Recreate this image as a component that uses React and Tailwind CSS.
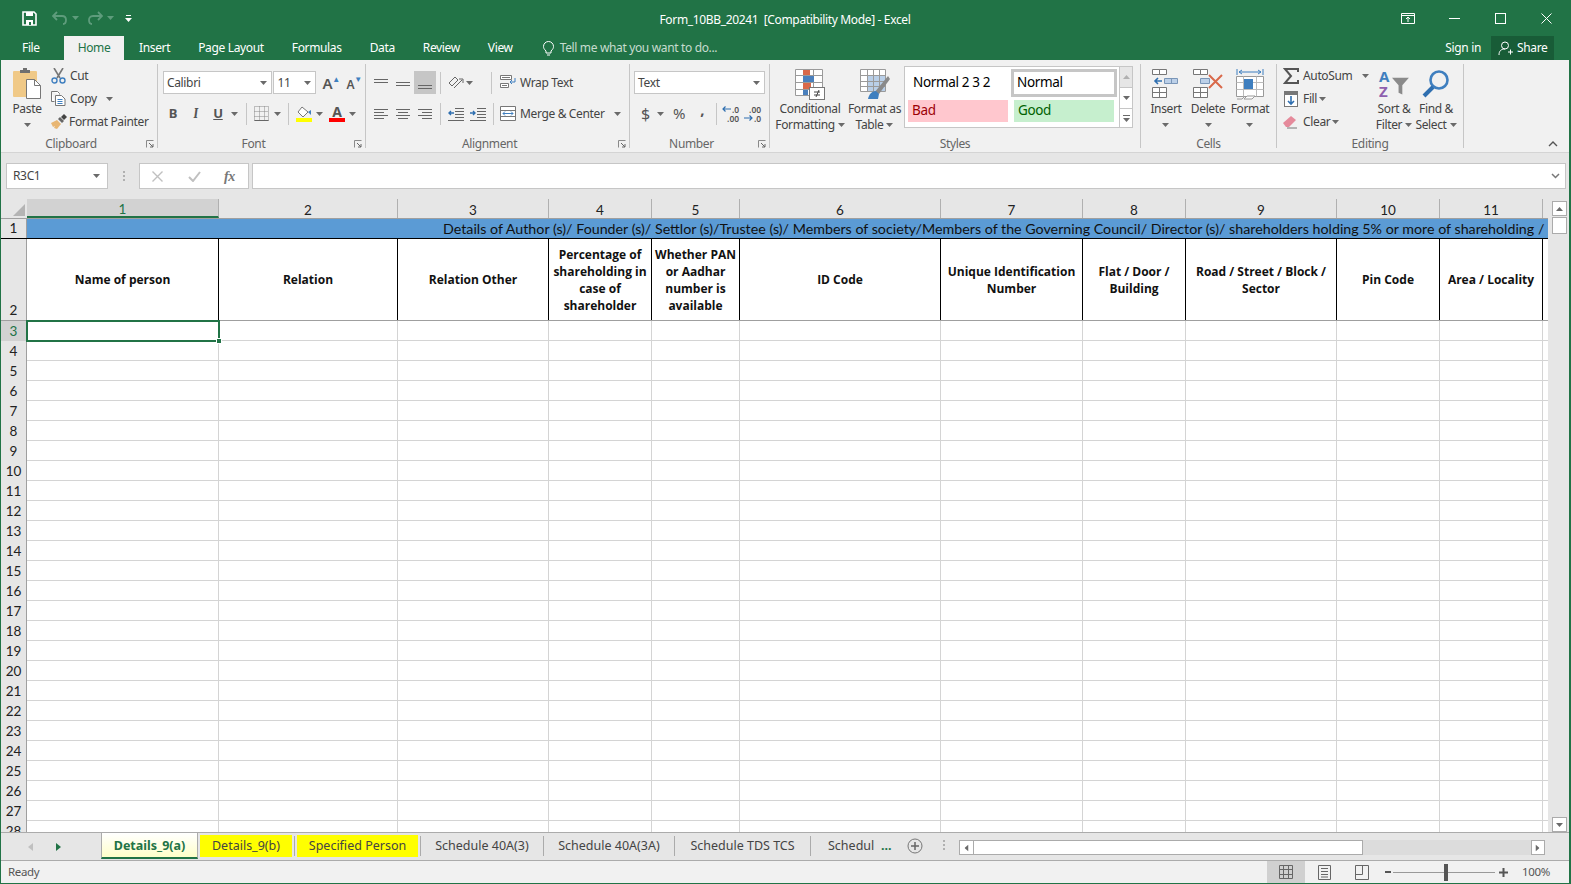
import React from "react";

// column widths of the sheet, in order
const columns = [
  { n: 1, w: "w-[192px]", title: "Name of person" },
  { n: 2, w: "w-[179px]", title: "Relation" },
  { n: 3, w: "w-[151px]", title: "Relation Other" },
  { n: 4, w: "w-[103px]", title: "Percentage of shareholding in case of shareholder" },
  { n: 5, w: "w-[88px]", title: "Whether PAN or Aadhar number is available" },
  { n: 6, w: "w-[201px]", title: "ID Code" },
  { n: 7, w: "w-[142px]", title: "Unique Identification Number" },
  { n: 8, w: "w-[103px]", title: "Flat / Door / Building" },
  { n: 9, w: "w-[151px]", title: "Road / Street / Block / Sector" },
  { n: 10, w: "w-[103px]", title: "Pin Code" },
  { n: 11, w: "w-[103px]", title: "Area / Locality" },
];
const emptyRows = Array.from({ length: 26 }, (_, i) => i + 3);

function Chev({ className = "", fill = "#6a6a6a" }) {
  return (
    <svg width="7" height="4" viewBox="0 0 7 4" className={className}>
      <path d="M0 0h7L3.5 4z" fill={fill} />
    </svg>
  );
}

function Sep({ className = "" }) {
  return <div className={`w-px h-[22px] bg-[#c6c6c6] ${className}`} />;
}

function Group({ className, label, launcher, children }) {
  return (
    <div className={`relative h-[84px] border-r border-[#c6c6c6] shrink-0 ${className}`}>
      {children}
      <div className={`absolute bottom-[-4px] left-0 right-0 text-center text-[12px] leading-[16px] text-[#666] ${launcher ? "pr-[16px]" : ""}`}>{label}</div>
      {launcher && (
        <svg width="8" height="8" viewBox="0 0 8 8" className="absolute right-[3px] bottom-0">
          <path d="M0.5 7.5V0.5H7.5" fill="none" stroke="#8a8a8a" />
          <path d="M3 3l4 4M7 4v3H4" fill="none" stroke="#666" />
        </svg>
      )}
    </div>
  );
}

function BigBtn({ icon, lines, chevOnly, className = "" }) {
  return (
    <div className={`flex flex-col items-center shrink-0 ${className}`}>
      <div className="h-[32px] flex items-center justify-center">{icon}</div>
      <div className="mt-px text-[12px] leading-[16px] text-[#444] text-center whitespace-nowrap">
        {lines.map((l, i) => (
          <div key={i} className="flex items-center justify-center gap-[3px] h-[16px]">
            {l}
            {i === lines.length - 1 && !chevOnly && <Chev />}
          </div>
        ))}
        {chevOnly && (
          <div className="h-[16px] flex items-center justify-center">
            <Chev />
          </div>
        )}
      </div>
    </div>
  );
}

function SelectBox({ className, text }) {
  return (
    <div className={`h-[23px] bg-white border border-[#c6c6c6] flex items-center justify-between pl-[3px] pr-[4px] text-[12px] text-[#444] ${className}`}>
      <span>{text}</span>
      <Chev />
    </div>
  );
}

function Lines({ rows }) {
  return (
    <svg width="16" height="14" viewBox="0 0 16 14">
      {rows.map((r, i) => (
        <path key={i} d={`M${r[0]} ${r[2]}.5H${r[1]}`} stroke="#666" />
      ))}
    </svg>
  );
}

function ClipboardGroup() {
  return (
    <Group className="w-[157px]" label="Clipboard" launcher>
      <div className="flex pl-[9px]">
        <BigBtn
          chevOnly
          lines={["Paste"]}
          className="w-[34px] mt-[4px]"
          icon={
            <svg width="30" height="32" viewBox="0 0 30 32">
              <rect x="1" y="3" width="24" height="26" rx="1" fill="#f0c987" />
              <path d="M8 5V2h3V0h4v2h3v3z" fill="#6f6f6f" />
              <path d="M14.5 11.5h8l6 6v13h-14z" fill="#fff" stroke="#777" />
              <path d="M22.5 11.5v6h6" fill="none" stroke="#777" />
            </svg>
          }
        />
        <div className="ml-[7px] flex flex-col text-[12px] text-[#444] leading-[23px]">
          <div className="flex items-center h-[23px]">
            <svg width="15" height="16" viewBox="0 0 15 16" className="mr-[4px]">
              <path d="M3 0l6 10M12 0L6 10" stroke="#777" strokeWidth="1.6" fill="none" />
              <circle cx="3.5" cy="12.5" r="2.5" fill="none" stroke="#3f7fbf" strokeWidth="1.4" />
              <circle cx="11.5" cy="12.5" r="2.5" fill="none" stroke="#3f7fbf" strokeWidth="1.4" />
            </svg>
            Cut
          </div>
          <div className="flex items-center h-[23px]">
            <svg width="15" height="15" viewBox="0 0 15 15" className="mr-[4px]">
              <path d="M.5.5h6l2 2v1M.5.5v10h3" fill="#fff" stroke="#777" />
              <path d="M4.5 4.5h6l3.5 3.5v6.5h-9.500z" fill="#fff" stroke="#777" />
              <path d="M6.500 8.500h5M6.500 10.500h5M6.500 12.500h5" stroke="#3f7fbf" />
            </svg>
            Copy
            <Chev className="ml-[9px]" />
          </div>
          <div className="flex items-center h-[23px]">
            <svg width="16" height="15" viewBox="0 0 16 15" className="mr-[2px]">
              <path d="M0 9l6-3 4 4-4 5-3-1 1-2-2 1z" fill="#e8b673" />
              <path d="M7 5l4 4 2-2-4-4z" fill="#666" />
              <path d="M10 3l3-3 3 3-3 3z" fill="#444" />
            </svg>
            Format Painter
          </div>
        </div>
      </div>
    </Group>
  );
}

function FontGroup() {
  const slot = "flex items-center justify-center shrink-0";
  return (
    <Group className="w-[208px]" label="Font" launcher>
      <div className="flex items-center pt-[7px] pl-[5px]">
        <SelectBox className="w-[110px]" text="Calibri" />
        <SelectBox className="w-[43px] ml-px" text="11" />
        <div className="ml-[4px] w-[22px] flex justify-center items-end text-[15px] leading-none text-[#555] font-semibold">
          A<span className="text-[8px] text-[#3f7fbf] mb-[8px]">▲</span>
        </div>
        <div className="ml-px w-[22px] flex justify-center items-end text-[12px] leading-none text-[#555] font-semibold">
          A<span className="text-[8px] text-[#3f7fbf] mb-[8px]">▼</span>
        </div>
      </div>
      <div className="flex items-center pl-[4px] mt-[8px] h-[23px] text-[#555]">
        <div className={`${slot} w-[22px] text-[13px] font-bold`}>B</div>
        <div className={`${slot} w-[23px] text-[13px] italic font-serif font-bold`}>I</div>
        <div className={`${slot} w-[22px] text-[13px] font-bold underline`}>U</div>
        <Chev className="ml-[2px]" />
        <Sep className="ml-[8px]" />
        <div className={`${slot} ml-[7px]`}>
          <svg width="15" height="15" viewBox="0 0 15 15">
            <path d="M.5.5h14v14H.5z M5.500.5v14M10.500.5v14M.5 5.500h14M.5 10.500h14" fill="none" stroke="#888" strokeDasharray="1 1" />
            <path d="M.5 14.500h14" stroke="#666" />
          </svg>
        </div>
        <Chev className="ml-[5px]" />
        <Sep className="ml-[7px]" />
        <div className="ml-[7px] flex flex-col items-center w-[16px]">
          <svg width="16" height="12" viewBox="0 0 16 12">
            <path d="M6 1l6 5-5 5-5-5z" fill="#fff" stroke="#777" />
            <path d="M12 6l3-2v5z" fill="#3f7fbf" />
          </svg>
          <div className="w-[16px] h-[4px] bg-[#ffff00]" />
        </div>
        <Chev className="ml-[4px]" />
        <div className="ml-[6px] flex flex-col items-center w-[16px]">
          <span className="text-[14px] leading-[12px] font-bold text-[#555]">A</span>
          <div className="w-[16px] h-[4px] bg-[#ff0000]" />
        </div>
        <Chev className="ml-[4px]" />
      </div>
    </Group>
  );
}

function AlignmentGroup() {
  const cell = "w-[22px] flex items-center justify-center shrink-0";
  return (
    <Group className="w-[264px]" label="Alignment" launcher>
      <div className="flex items-center pl-[4px] pt-[7px] h-[30px]">
        <div className={cell}>
          <Lines rows={[[1, 15, 3], [1, 15, 6]]} />
        </div>
        <div className={cell}>
          <Lines rows={[[1, 15, 6], [1, 15, 9]]} />
        </div>
        <div className={`${cell} h-[23px] bg-[#c6c6c6]`}>
          <Lines rows={[[1, 15, 9], [1, 15, 12]]} />
        </div>
        <Sep className="ml-[4px]" />
        <div className="ml-[6px] w-[18px] flex justify-center">
          <svg width="16" height="15" viewBox="0 0 16 15">
            <path d="M1 8l6-6 3 3-6 6z" fill="none" stroke="#666" />
            <path d="M6 13l8-8M11 4h4v4" fill="none" stroke="#666" />
          </svg>
        </div>
        <Chev className="ml-[1px]" />
        <Sep className="ml-[18px]" />
        <svg width="16" height="15" viewBox="0 0 16 15" className="ml-[8px]">
          <path d="M.5.5h11v4H.5zM.5 8.500h8v4H.5z" fill="#fff" stroke="#777" />
          <path d="M2 2.500h8M2 10.500h5" stroke="#777" />
          <path d="M15 3v4H10M12 5l-2 2 2 2" fill="none" stroke="#3f7fbf" />
        </svg>
        <span className="ml-[4px] text-[12px] text-[#444]">Wrap Text</span>
      </div>
      <div className="flex items-center pl-[4px] mt-[8px] h-[23px]">
        <div className={cell}>
          <Lines rows={[[1, 15, 2], [1, 11, 5], [1, 15, 8], [1, 11, 11]]} />
        </div>
        <div className={cell}>
          <Lines rows={[[1, 15, 2], [3, 13, 5], [1, 15, 8], [3, 13, 11]]} />
        </div>
        <div className={cell}>
          <Lines rows={[[1, 15, 2], [5, 15, 5], [1, 15, 8], [5, 15, 11]]} />
        </div>
        <Sep className="ml-[4px]" />
        <svg width="16" height="14" viewBox="0 0 16 14" className="ml-[7px]">
          <path d="M7 1.500h9M7 4.500h9M7 7.500h9M7 10.500h9M0 13.500h16" stroke="#666" />
          <path d="M6 6H1M3 4L1 6l2 2" fill="none" stroke="#2f6fb0" strokeWidth="1.4" />
        </svg>
        <svg width="16" height="14" viewBox="0 0 16 14" className="ml-[6px]">
          <path d="M7 1.500h9M7 4.500h9M7 7.500h9M7 10.500h9M0 13.500h16" stroke="#666" />
          <path d="M0 6h5M3 4l2 2-2 2" fill="none" stroke="#2f6fb0" strokeWidth="1.4" />
        </svg>
        <Sep className="ml-[7px]" />
        <svg width="16" height="15" viewBox="0 0 16 15" className="ml-[6px]">
          <path d="M.5.5h15v14H.5zM.5 4.500h15M.5 10.500h15" fill="#fff" stroke="#777" />
          <path d="M3 7.500h10M5 5.500l-2 2 2 2M11 5.500l2 2-2 2" fill="none" stroke="#3f7fbf" />
        </svg>
        <span className="ml-[4px] text-[12px] text-[#444]">Merge &amp; Center</span>
        <Chev className="ml-[9px]" />
      </div>
    </Group>
  );
}

function DecimalIcon({ more }) {
  const arrow = (
    <svg width="9" height="6" viewBox="0 0 9 6" className="mr-px">
      <path d={more ? "M0 3h8M5.500 .5L8 3 5.500 5.500" : "M9 3H1M3.500 .5L1 3l2.500 2.500"} fill="none" stroke="#2f6fb0" strokeWidth="1.200" />
    </svg>
  );
  return (
    <div className="w-[22px] shrink-0 text-[8.500px] leading-[9px] tracking-normal text-[#555] font-semibold text-right">
      {more ? <div>.00</div> : <div className="flex items-center justify-end">{arrow}.0</div>}
      {more ? <div className="flex items-center justify-end">{arrow}.0</div> : <div>.00</div>}
    </div>
  );
}

function NumberGroup() {
  return (
    <Group className="w-[140px]" label="Number" launcher>
      <div className="pt-[7px] pl-[4px]">
        <SelectBox className="w-[131px]" text="Text" />
      </div>
      <div className="flex items-center pl-[10px] mt-[8px] h-[23px] text-[#555]">
        <span className="w-[11px] text-center text-[16px] leading-none">$</span>
        <Chev className="ml-[6px]" />
        <span className="ml-[9px] text-[15px] leading-none">%</span>
        <span className="ml-[15px] w-[5px] text-[15px] leading-none font-bold -mt-[8px]">,</span>
        <Sep className="ml-[11px]" />
        <DecimalIcon />
        <DecimalIcon more />
      </div>
    </Group>
  );
}

function StylesGroup() {
  const cond = (
    <svg width="30" height="31" viewBox="0 0 30 31">
      <path d="M.5.5h27v26H.5zM.5 6.500h27M.5 13.500h27M.5 20.500h27M8.500.5v26M18.500.5v26" fill="#fff" stroke="#9a9a9a" />
      <rect x="8" y="1" width="7" height="5" fill="#d9694a" />
      <rect x="8" y="7" width="11" height="6" fill="#4a80bd" />
      <rect x="8" y="14" width="8" height="6" fill="#d9694a" />
      <rect x="8" y="21" width="5" height="5" fill="#4a80bd" />
      <rect x="14.500" y="18.500" width="15" height="12" fill="#fff" stroke="#777" />
      <path d="M19 23h6M19 26h6M24 21l-3 7" stroke="#444" fill="none" />
    </svg>
  );
  const table = (
    <svg width="30" height="31" viewBox="0 0 30 31">
      <path d="M.5.5h25v22H.5z" fill="#fff" stroke="#9a9a9a" />
      <rect x="7" y="6" width="18" height="16" fill="#b9cfe8" />
      <path d="M.5 6.500h25M.5 12.500h25M.5 17.500h25M7.500.5v22M13.500.5v22M19.500.5v22" stroke="#9a9a9a" fill="none" />
      <path d="M14 24l14-17 2 3-11 15z" fill="#8a8a8a" />
      <path d="M8 30c1-5 4-8 8-8l3 3-1 5z" fill="#3f7fbf" />
    </svg>
  );
  return (
    <Group className="w-[371px]" label="Styles">
      <div className="flex pt-[4px] pl-[6px]">
        <BigBtn className="w-[68px]" icon={cond} lines={["Conditional", "Formatting"]} />
        <BigBtn className="w-[55px] ml-[3px]" icon={table} lines={["Format as", "Table"]} />
        <div className="flex ml-[2px] mt-[-2px] h-[62px]">
          <div className="w-[215px] h-[62px] bg-white border border-[#c6c6c6] border-r-0 grid grid-cols-[103px_1fr] content-start gap-y-[3px] pl-[3px] pt-[2px] text-[13.500px] leading-none">
            <div className="h-[28px] flex items-center pl-[5px] text-black">Normal 2 3 2</div>
            <div className="h-[28px] w-[106px] border-[3px] border-[#c6c6c6] flex items-center pl-[3px] text-black">Normal</div>
            <div className="h-[22px] w-[100px] bg-[#ffc7ce] flex items-center pl-[4px] text-[#9c0006]">Bad</div>
            <div className="h-[22px] w-[100px] ml-[3px] bg-[#c6efce] flex items-center pl-[4px] text-[#006100]">Good</div>
          </div>
          <div className="w-[14px] flex flex-col">
            <div className="h-[22px] bg-[#e6e6e6] border border-[#c6c6c6] flex items-center justify-center">
              <Chev className="rotate-180" fill="#b0b0b0" />
            </div>
            <div className="h-[20px] bg-white border-x border-[#c6c6c6] flex items-center justify-center">
              <Chev />
            </div>
            <div className="h-[20px] bg-white border border-[#c6c6c6] flex flex-col items-center justify-center gap-[2px]">
              <div className="w-[7px] h-px bg-[#6a6a6a]" />
              <Chev />
            </div>
          </div>
        </div>
      </div>
    </Group>
  );
}

function CellsGroup() {
  const insert = (
    <svg width="28" height="30" viewBox="0 0 28 30">
      <path d="M.5.5h7v5h-7zM7.500.5h7v5h-7zM.5 18.500h14v10H.5zM7.500 18.500v10M.5 23.500h14" fill="#fff" stroke="#777" />
      <path d="M12.500 9.500h13v5h-13zM19.500 9.500v5" fill="#bcd0e8" stroke="#7a96b8" />
      <path d="M10 12H3M6 9l-3 3 3 3" fill="none" stroke="#2f6fb0" strokeWidth="1.6" />
    </svg>
  );
  const del = (
    <svg width="30" height="30" viewBox="0 0 30 30">
      <path d="M.5.5h7v5h-7zM7.500.5h7v5h-7zM.5 18.500h14v10H.5zM7.500 18.500v10M.5 23.500h14" fill="#fff" stroke="#777" />
      <path d="M7.500 9.500h9v5h-9z" fill="#bcd0e8" stroke="#7a96b8" />
      <path d="M16 6l13 13M29 6L16 19" stroke="#d9694a" strokeWidth="2" />
    </svg>
  );
  const format = (
    <svg width="28" height="32" viewBox="0 0 28 32">
      <path d="M1 1v6M27 1v6M3 4h22M6 2L3 4l3 2M22 2l3 2-3 2" fill="none" stroke="#3f7fbf" />
      <path d="M.5 8.500h27v20H.5z" fill="#fff" stroke="#999" />
      <path d="M.5 14.500h27M.5 21.500h27M7.500 8.500v20M20.500 8.500v20" stroke="#bbb" />
      <rect x="8" y="11" width="9" height="10" fill="#3f7fbf" />
      <path d="M8 31l3-3h8l-3 3zM1 31h5l2-2" fill="#fff" stroke="#999" />
    </svg>
  );
  return (
    <Group className="w-[136px]" label="Cells">
      <div className="flex pt-[4px] pl-[3px]">
        <BigBtn className="w-[44px]" icon={insert} chevOnly lines={["Insert"]} />
        <BigBtn className="w-[40px]" icon={del} chevOnly lines={["Delete"]} />
        <BigBtn className="w-[44px]" icon={format} chevOnly lines={["Format"]} />
      </div>
    </Group>
  );
}

function EditingGroup() {
  return (
    <Group className="w-[187px]" label="Editing">
      <div className="flex pl-[6px]">
        <div className="w-[95px] flex flex-col text-[12px] text-[#444]">
          <div className="h-[23px] flex items-center">
            <svg width="16" height="16" viewBox="0 0 16 16" className="mr-[4px]">
              <path d="M15 4V1H2l6 7-6 7h13v-3" fill="none" stroke="#555" strokeWidth="2" />
            </svg>
            AutoSum
            <Chev className="ml-[10px]" />
          </div>
          <div className="h-[23px] flex items-center">
            <svg width="14" height="16" viewBox="0 0 14 16" className="ml-[1px] mr-[5px]">
              <rect x=".5" y=".5" width="13" height="15" fill="#fff" stroke="#777" />
              <rect x="1" y="1" width="12" height="3" fill="#777" />
              <path d="M7 5v8M4 10l3 3 3-3" fill="none" stroke="#2f6fb0" strokeWidth="1.6" />
            </svg>
            Fill
            <Chev className="ml-[2px]" />
          </div>
          <div className="h-[23px] flex items-center">
            <svg width="15" height="14" viewBox="0 0 15 14" className="mr-[5px]">
              <path d="M0 8l8-7 5 4-7 7H3z" fill="#e58a9b" />
              <path d="M4 13h10" stroke="#777" />
            </svg>
            Clear
            <Chev className="ml-[2px]" />
          </div>
        </div>
        <BigBtn
          className="w-[44px] mt-[4px] -ml-[6px]"
          lines={["Sort &", "Filter"]}
          icon={
            <div className="w-[30px] h-[30px] flex">
              <div className="w-[14px] font-bold text-[15px] leading-[15px] tracking-normal">
                <div className="text-[#3f7fbf]">A</div>
                <div className="text-[#8e5fae]">Z</div>
              </div>
              <svg width="18" height="20" viewBox="0 0 18 20" className="mt-[8px]">
                <path d="M0 0h18l-7 8v10l-4-2V8z" fill="#8a8a8a" />
              </svg>
            </div>
          }
        />
        <BigBtn
          className="w-[44px] mt-[4px] ml-[-2px]"
          lines={["Find &", "Select"]}
          icon={
            <svg width="28" height="30" viewBox="0 0 28 30">
              <circle cx="17" cy="11" r="8.500" fill="none" stroke="#3f7fbf" strokeWidth="2.600" />
              <path d="M11 18L2 27" stroke="#2f6fb0" strokeWidth="4" />
            </svg>
          }
        />
      </div>
    </Group>
  );
}

function Ribbon() {
  return (
    <div className="relative h-[93px] bg-[#f1f1f1] border-b border-[#d4d4d4] pt-[4px] flex shrink-0 text-[12px]">
      <ClipboardGroup />
      <FontGroup />
      <AlignmentGroup />
      <NumberGroup />
      <StylesGroup />
      <CellsGroup />
      <EditingGroup />
      <svg width="10" height="6" viewBox="0 0 10 6" className="absolute right-[11px] bottom-[5px]">
        <path d="M1 5l4-4 4 4" fill="none" stroke="#555" strokeWidth="1.400" />
      </svg>
    </div>
  );
}

function TitleBar() {
  return (
    <div className="h-[36px] bg-[#217346] grid grid-cols-[1fr_auto_1fr] items-center shrink-0 text-white">
      <div className="flex items-center pl-[21px]">
        <svg width="15" height="15" viewBox="0 0 15 15">
          <path d="M1 1h11l2 2v11H1z" fill="none" stroke="#fff" strokeWidth="1.600" />
          <path d="M4 1h7v4H4zM4 9h7v5H4z" fill="#fff" />
          <rect x="7" y="11" width="2" height="3" fill="#217346" />
        </svg>
        <svg width="16" height="14" viewBox="0 0 16 14" className="ml-[15px]">
          <path d="M5 1L1 5l4 4M1 5h9c3 0 4 2 4 4s-1 4-3 4" fill="none" stroke="#5e9c7c" strokeWidth="1.800" />
        </svg>
        <Chev className="ml-[4px]" fill="#5e9c7c" />
        <svg width="16" height="14" viewBox="0 0 16 14" className="ml-[8px]">
          <path d="M11 1l4 4-4 4M15 5H6C3 5 2 7 2 9s1 4 3 4" fill="none" stroke="#5e9c7c" strokeWidth="1.800" />
        </svg>
        <Chev className="ml-[4px]" fill="#5e9c7c" />
        <svg width="7" height="8" viewBox="0 0 7 8" className="ml-[11px] mt-[2px]">
          <path d="M1 .5h5" stroke="#fff" />
          <path d="M0 3h7L3.500 7z" fill="#fff" />
        </svg>
      </div>
      <div className="text-[12px] whitespace-pre pt-[3px]">Form_10BB_20241  [Compatibility Mode] - Excel</div>
      <div className="flex items-center justify-end pr-[17px]">
        <svg width="14" height="11" viewBox="0 0 14 11">
          <path d="M.5.5h13v10H.5zM.5 2.500h13" fill="none" stroke="#fff" />
          <path d="M7 9V4M5 6l2-2 2 2" fill="none" stroke="#fff" />
        </svg>
        <div className="ml-[34px] w-[11px] h-px bg-white" />
        <div className="ml-[35px] w-[11px] h-[11px] border border-white" />
        <svg width="11" height="11" viewBox="0 0 11 11" className="ml-[35px]">
          <path d="M.5.5l10 10M10.500.5l-10 10" stroke="#fff" />
        </svg>
      </div>
    </div>
  );
}

function TabBar() {
  return (
    <div className="h-[24px] bg-[#217346] flex items-stretch shrink-0 text-[12px] text-white">
      <div className="pl-[21px] w-[63px] flex items-center">File</div>
      <div className="w-[60px] bg-[#f1f1f1] text-[#217346] flex items-center justify-center">Home</div>
      <div className="pl-[15px] flex items-center gap-[28px]">
        <span>Insert</span>
        <span>Page Layout</span>
        <span>Formulas</span>
        <span>Data</span>
        <span>Review</span>
        <span>View</span>
      </div>
      <div className="ml-[30px] flex items-center text-[#c6dccf]">
        <svg width="11" height="15" viewBox="0 0 11 15" className="mr-[6px]">
          <path d="M3 10C1 8 .5 7 .5 5.500a5 5 0 0 1 10 0C10.500 7 10 8 8 10v2H3zM4 14h3" fill="none" stroke="#fff" />
        </svg>
        Tell me what you want to do...
      </div>
      <div className="ml-auto flex items-stretch pr-[15px]">
        <span className="flex items-center mr-[10px]">Sign in</span>
        <div className="w-[63px] bg-[#185c37] flex items-center pl-[7px]">
          <svg width="15" height="15" viewBox="0 0 15 15" className="mr-[4px]">
            <circle cx="7" cy="4.500" r="3.500" fill="none" stroke="#fff" />
            <path d="M1 14c0-4 2-6 6-6M10 11h5M12.500 8.500v5" fill="none" stroke="#fff" />
          </svg>
          Share
        </div>
      </div>
    </div>
  );
}

function FormulaBar() {
  return (
    <div className="h-[46px] bg-[#e6e6e6] flex items-start pt-[10px] pl-[5px] pr-[3px] shrink-0 text-[12px]">
      <div className="w-[102px] h-[26px] bg-white border border-[#c6c6c6] flex items-center justify-between pl-[6px] pr-[7px] text-[#444]">
        R3C1
        <Chev />
      </div>
      <div className="w-[31px] h-[26px] flex flex-col items-center justify-center gap-[2px]">
        <div className="w-[2px] h-[2px] bg-[#b0b0b0]" />
        <div className="w-[2px] h-[2px] bg-[#b0b0b0]" />
        <div className="w-[2px] h-[2px] bg-[#b0b0b0]" />
      </div>
      <div className="w-[110px] h-[26px] bg-white border border-[#c6c6c6] flex items-center text-[#777]">
        <svg width="11" height="11" viewBox="0 0 11 11" className="ml-[12px]">
          <path d="M.5.5l10 10M10.500.5l-10 10" stroke="#c0c0c0" strokeWidth="1.400" />
        </svg>
        <svg width="13" height="11" viewBox="0 0 13 11" className="ml-[25px]">
          <path d="M1 6l4 4 7-9" fill="none" stroke="#c0c0c0" strokeWidth="2" />
        </svg>
        <span className="ml-[23px] font-['Liberation_Serif',serif] italic font-bold text-[14px]">fx</span>
      </div>
      <div className="ml-[3px] flex-1 h-[26px] bg-white border border-[#c6c6c6] flex items-center justify-end pr-[5px]">
        <svg width="9" height="6" viewBox="0 0 9 6">
          <path d="M1 1l3.500 3.500L8 1" fill="none" stroke="#777" strokeWidth="1.500" />
        </svg>
      </div>
    </div>
  );
}

function SheetGrid() {
  return (
    <div className="flex-1 min-h-0 bg-[#e6e6e6] flex">
      <div className="w-[1547px] overflow-hidden bg-white font-['Lato',sans-serif] tracking-normal shrink-0">
        {/* column header row */}
        <div className="flex h-[20px] bg-[#e6e6e6] border-b border-[#9f9f9f]">
          <div className="w-[26px] flex items-end justify-end p-[2px] shrink-0">
            <svg width="12" height="12" viewBox="0 0 12 12">
              <path d="M12 0v12H0z" fill="#b4b4b4" />
            </svg>
          </div>
          {columns.map((c) => (
            <div
              key={c.n}
              className={`${c.w} shrink-0 flex items-center justify-center pt-[4px] text-[13.500px] text-[#222] border-r border-[#b0b0b0] ${c.n === 1 ? "bg-[#d2d2d2] text-[#217346] border-b-2 border-b-[#217346]" : ""}`}
            >
              {c.n}
            </div>
          ))}
        </div>
        {/* merged title row */}
        <div className="flex h-[19px]">
          <div className="w-[26px] shrink-0 bg-[#e6e6e6] border-r border-[#9f9f9f] flex items-center justify-center text-[13.500px] text-[#222]">1</div>
          <div className="flex-1 bg-[#5b9bd5] overflow-hidden whitespace-nowrap text-[14.250px] leading-[19px] text-[#111] pl-[416px]">
            Details of Author (s)/ Founder (s)/ Settlor (s)/Trustee (s)/ Members of society/Members of the Governing Council/ Director (s)/ shareholders holding 5% or more of shareholding / Others
          </div>
        </div>
        {/* heading row */}
        <div className="flex h-[82px] border-t border-black">
          <div className="w-[26px] shrink-0 bg-[#e6e6e6] border-r border-[#9f9f9f] flex items-end justify-center text-[13.500px] text-[#222]">2</div>
          {columns.map((c) => (
            <div
              key={c.n}
              className={`${c.w} shrink-0 flex items-center justify-center text-center border-r border-black font-['Open_Sans',sans-serif] font-bold text-[12px] leading-[17px] text-[#111] px-[1px]`}
            >
              {c.title}
            </div>
          ))}
          <div className="flex-1" />
        </div>
        {/* empty rows */}
        {emptyRows.map((r) => (
          <div key={r} className={`flex ${r === 3 ? "h-[21px] border-t border-[#9f9f9f]" : "h-[20px]"}`}>
            <div
              className={`w-[26px] shrink-0 border-r border-[#9f9f9f] flex items-center justify-center text-[13.500px] ${r === 3 ? "bg-[#d2d2d2] text-[#217346]" : "bg-[#e6e6e6] text-[#222]"}`}
            >
              {r}
            </div>
            {columns.map((c) => (
              <div
                key={c.n}
                className={`${c.w} shrink-0 border-r border-b border-[#d4d4d4] relative ${r === 3 && c.n === 1 ? "z-10 outline-2 -outline-offset-1 outline-[#217346]" : ""}`}
              >
                {r === 3 && c.n === 1 && (
                  <div className="absolute right-[-4px] bottom-[-4px] w-[6px] h-[6px] bg-[#217346] border border-white" />
                )}
              </div>
            ))}
            <div className="flex-1 border-b border-[#d4d4d4]" />
          </div>
        ))}
      </div>
      {/* vertical scroll bar */}
      <div className="flex-1 flex flex-col items-center pt-[2px] pl-[4px] pr-[2px]">
        <div className="w-[15px] h-[15px] bg-white border border-[#ababab] flex items-center justify-center">
          <Chev className="rotate-180" />
        </div>
        <div className="w-[15px] h-[17px] mt-px bg-white border border-[#ababab]" />
        <div className="flex-1" />
        <div className="w-[15px] h-[15px] bg-white border border-[#ababab] flex items-center justify-center">
          <Chev />
        </div>
      </div>
    </div>
  );
}

function SheetTabs() {
  const plain = "flex items-center text-[#444] border-r border-[#ababab] h-[20px] shrink-0";
  return (
    <div className="h-[29px] bg-[#e6e6e6] border-t border-[#ababab] border-b flex items-start shrink-0 text-[12.500px] tracking-normal whitespace-nowrap">
      <div className="w-[100px] h-[27px] flex items-center shrink-0">
        <svg width="5" height="8" viewBox="0 0 5 8" className="ml-[27px]">
          <path d="M5 0v8L0 4z" fill="#c0c0c0" />
        </svg>
        <svg width="5" height="8" viewBox="0 0 5 8" className="ml-[23px]">
          <path d="M0 0v8l5-4z" fill="#217346" />
        </svg>
      </div>
      <div className="w-[97px] h-[27px] -mt-px pt-[3px] bg-linear-to-b from-white to-[#ffffc8] border-x border-t border-[#ababab] border-b-2 border-b-[#217346] text-[#217346] font-bold flex items-center justify-center shrink-0">
        Details_9(a)
      </div>
      <div className="ml-[2px] mt-[2px] pt-px w-[92px] h-[22px] bg-[#ffff00] text-[#444] flex items-center justify-center shrink-0">Details_9(b)</div>
      <div className="mt-[3px] ml-[2px] w-px h-[20px] bg-[#ababab]" />
      <div className="ml-[2px] mt-[2px] pt-px w-[121px] h-[22px] bg-[#ffff00] text-[#444] flex items-center justify-center shrink-0">Specified Person</div>
      <div className="mt-[3px] ml-[2px] w-px h-[20px] bg-[#ababab]" />
      <div className={`${plain} mt-[3px] pt-px w-[123px] justify-center`}>Schedule 40A(3)</div>
      <div className={`${plain} mt-[3px] pt-px w-[131px] justify-center`}>Schedule 40A(3A)</div>
      <div className={`${plain} mt-[3px] pt-px w-[136px] justify-center`}>Schedule TDS TCS</div>
      <div className="mt-[3px] pt-px h-[20px] flex items-center text-[#444] ml-[17px] w-[53px] shrink-0">Schedul</div>
      <span className="mt-[3px] h-[20px] flex items-center text-[#217346] font-bold shrink-0">...</span>
      <svg width="16" height="16" viewBox="0 0 16 16" className="ml-[15px] mt-[5px] shrink-0">
        <circle cx="8" cy="8" r="7" fill="none" stroke="#777" />
        <path d="M8 4v8M4 8h8" stroke="#666" strokeWidth="1.500" />
      </svg>
      <div className="ml-[20px] mt-[7px] flex flex-col gap-[2px] shrink-0">
        <div className="w-[2px] h-[2px] bg-[#b0b0b0]" />
        <div className="w-[2px] h-[2px] bg-[#b0b0b0]" />
        <div className="w-[2px] h-[2px] bg-[#b0b0b0]" />
      </div>
      <div className="ml-[14px] mt-[7px] w-[586px] h-[15px] bg-[#dcdcdc] flex shrink-0">
        <div className="w-[15px] bg-white border border-[#ababab] flex items-center justify-center">
          <Chev className="rotate-90" />
        </div>
        <div className="w-[389px] bg-white border border-l-0 border-[#ababab]" />
        <div className="flex-1" />
        <div className="w-[14px] bg-white border border-[#ababab] flex items-center justify-center">
          <Chev className="-rotate-90" />
        </div>
      </div>
    </div>
  );
}

function StatusBar() {
  return (
    <div className="h-[22px] bg-[#f1f1f1] flex items-center shrink-0 text-[11.500px] text-[#555]">
      <span className="pl-[7px]">Ready</span>
      <div className="ml-auto flex items-center h-full pr-[19px]">
        <div className="w-[38px] h-full bg-[#d0d0d0] flex items-center justify-center">
          <svg width="14" height="14" viewBox="0 0 14 14">
            <path d="M.5.5h13v13H.5zM.5 4.500h13M.5 9.500h13M4.500.5v13M9.500.5v13" fill="none" stroke="#666" />
          </svg>
        </div>
        <svg width="13" height="15" viewBox="0 0 13 15" className="ml-[13px]">
          <path d="M.5.5h12v14H.5z" fill="none" stroke="#666" />
          <path d="M3 3.500h7M3 6.500h7M3 9.500h7M3 12h7" stroke="#666" />
        </svg>
        <svg width="14" height="15" viewBox="0 0 14 15" className="ml-[24px]">
          <path d="M.5.5h13v14H.5zM.5 9.500h7V.5" fill="none" stroke="#666" />
        </svg>
        <div className="ml-[16px] w-[6px] h-[2px] bg-[#555]" />
        <div className="ml-[2px] w-[102px] h-px bg-[#999] relative">
          <div className="absolute left-[51px] top-[-8px] w-[4px] h-[17px] bg-[#555]" />
        </div>
        <svg width="9" height="9" viewBox="0 0 9 9" className="ml-[4px]">
          <path d="M4.500 0v9M0 4.500h9" stroke="#555" strokeWidth="2" />
        </svg>
        <span className="ml-[14px]">100%</span>
      </div>
    </div>
  );
}

export default function App() {
  return (
    <div className="w-[1571px] h-[884px] overflow-hidden flex flex-col bg-white border-l border-r-2 border-b border-[#217346] font-['Noto_Sans',sans-serif] tracking-[-0.35px]">
      <TitleBar />
      <TabBar />
      <Ribbon />
      <FormulaBar />
      <SheetGrid />
      <SheetTabs />
      <StatusBar />
    </div>
  );
}
